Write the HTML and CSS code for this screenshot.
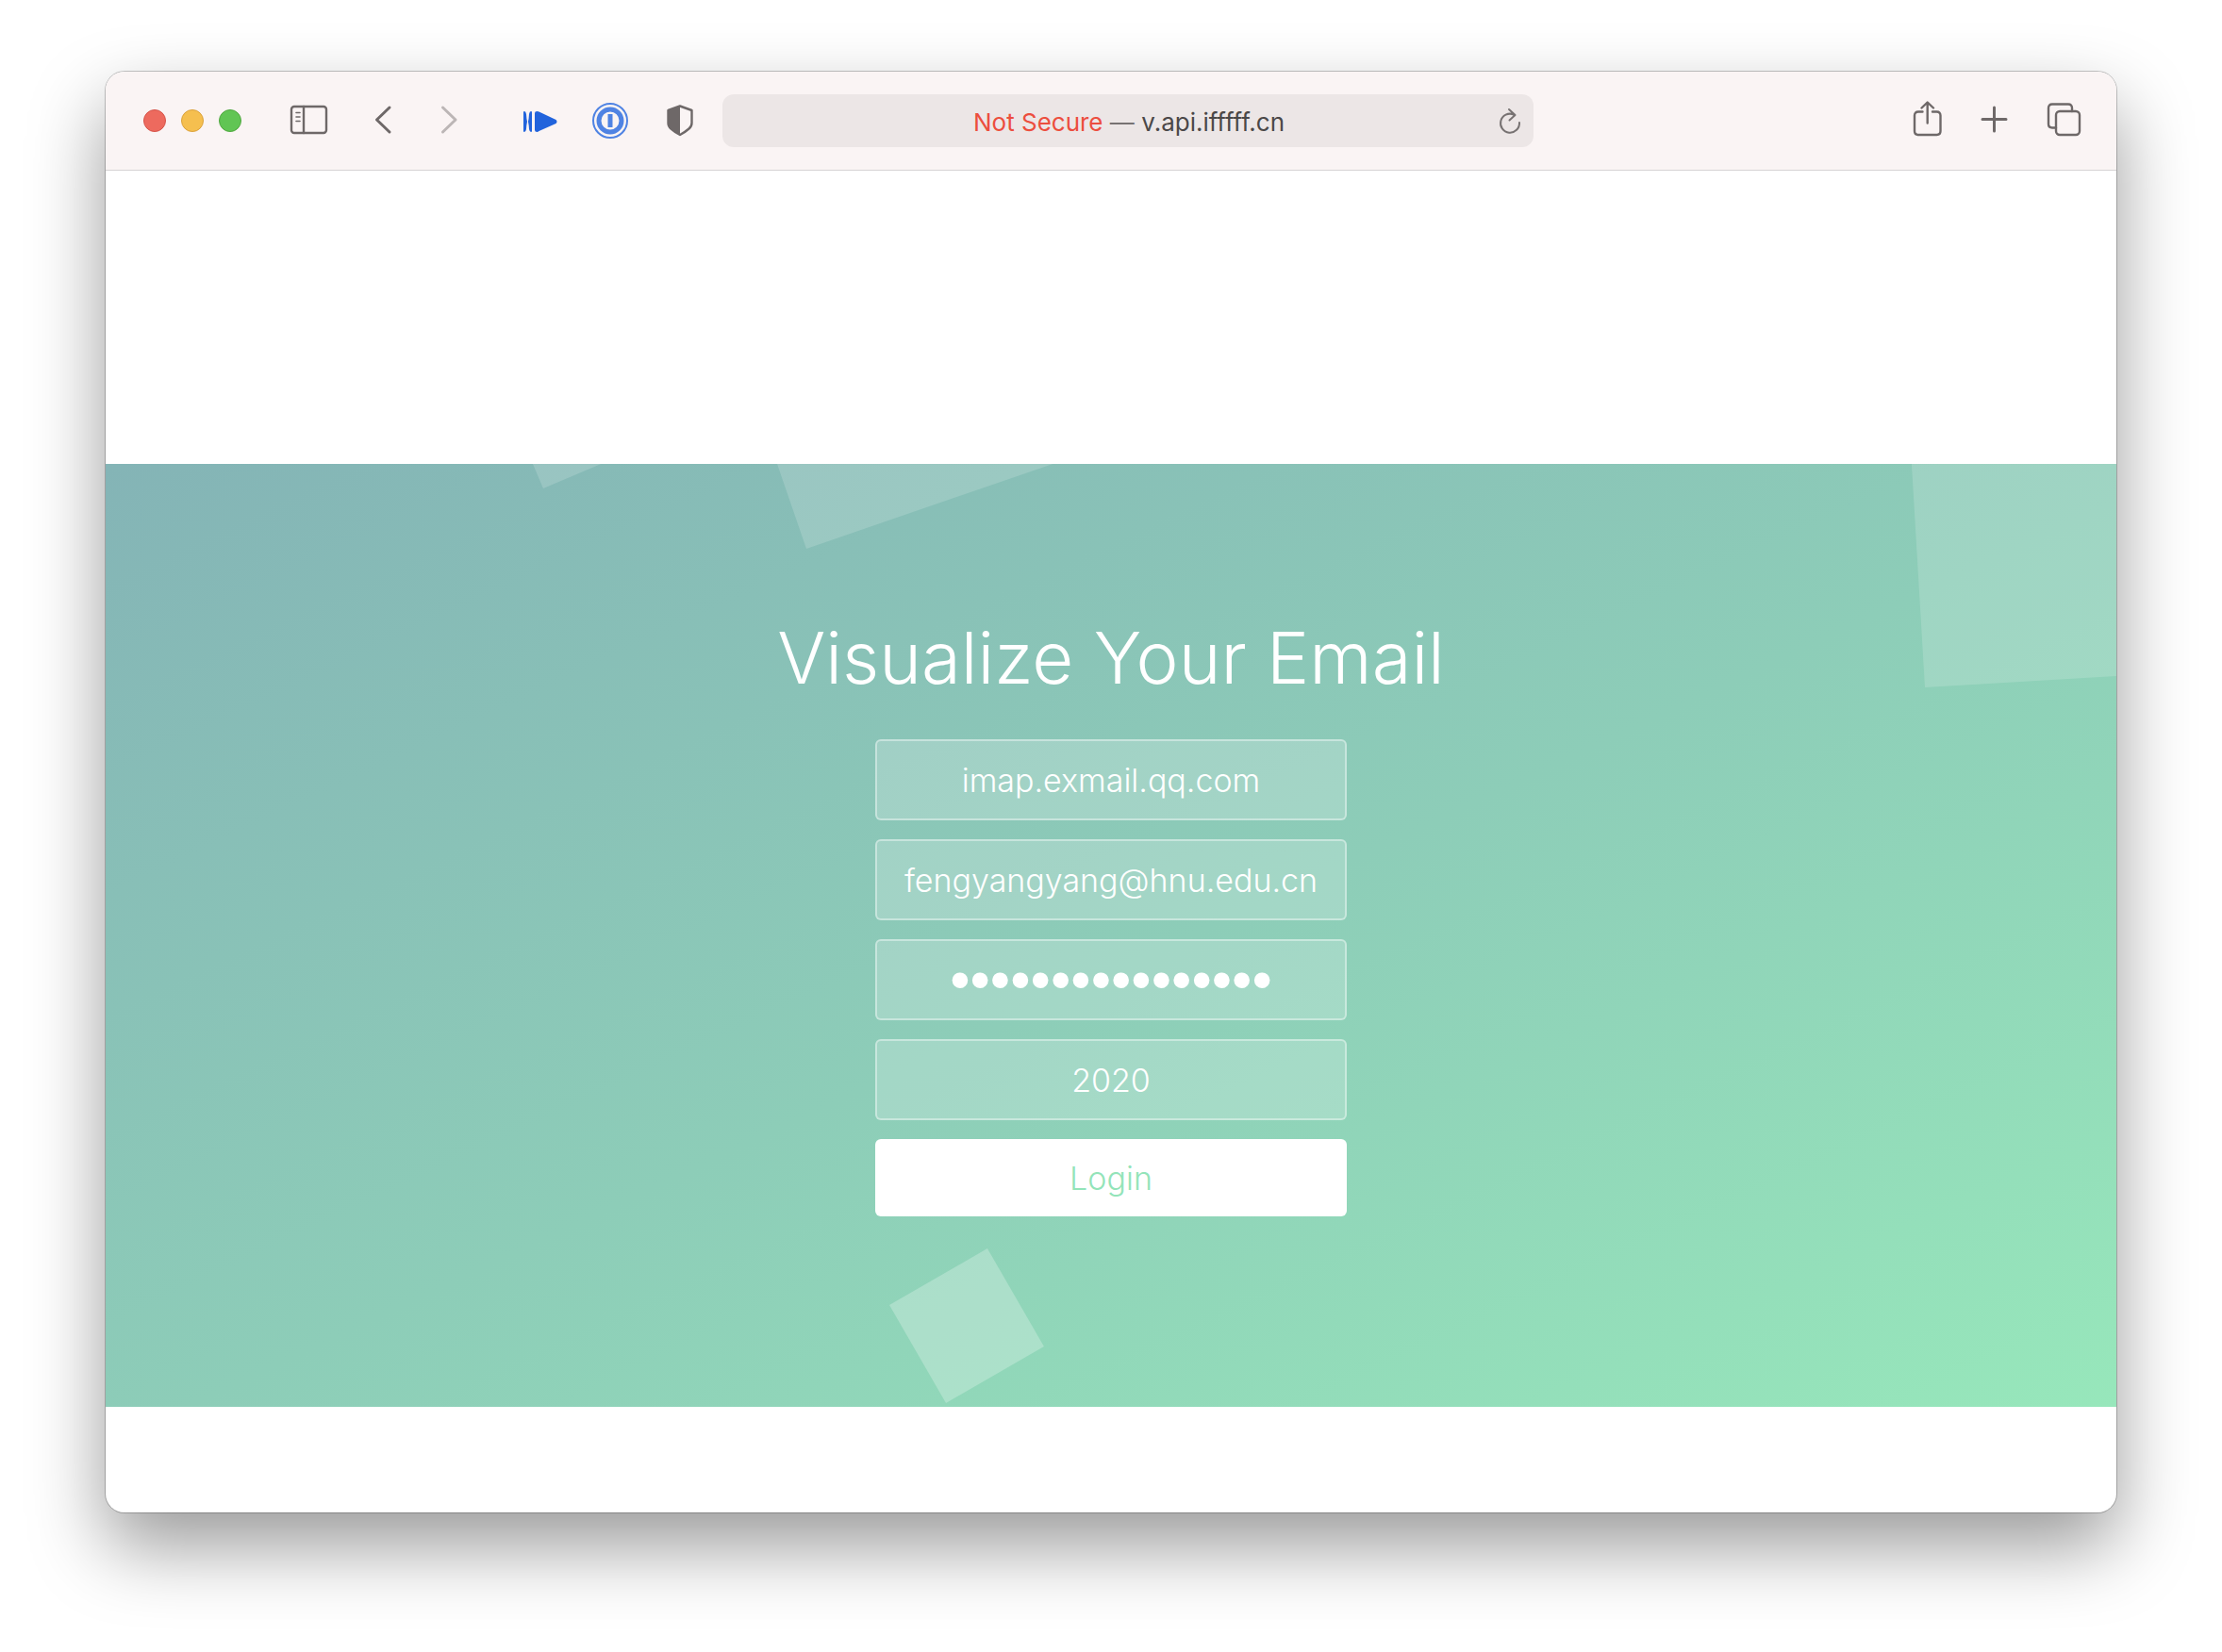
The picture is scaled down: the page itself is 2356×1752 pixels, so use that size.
FILE: index.html
```html
<!DOCTYPE html>
<html lang="en">
<head>
<meta charset="utf-8">
<title>Visualize Your Email</title>
<link rel="stylesheet" href="styles.css">
</head>
<body>
<div class="window">
  <header class="toolbar">
    <div class="lights">
      <button class="light light-close" aria-label="Close"></button>
      <button class="light light-minimize" aria-label="Minimize"></button>
      <button class="light light-zoom" aria-label="Zoom"></button>
    </div>
    <button class="icon" aria-label="Sidebar">
      <svg viewBox="0 0 40 40"><rect x="1" y="5" width="37" height="28" rx="3"/><path d="M14 5v28"/><path class="thin" d="M6 11.500h4M6 16h4M6 20.500h4"/></svg>
    </button>
    <nav class="group history">
      <button class="icon" aria-label="Back"><svg viewBox="0 0 40 40"><path class="bold" d="M27 6 13.500 19 27 32"/></svg></button>
      <button class="icon icon-off" aria-label="Forward"><svg viewBox="0 0 40 40"><path class="bold" d="M13.500 6 27 19 13.500 32"/></svg></button>
    </nav>
    <div class="group extensions">
      <button class="icon" aria-label="Fast forward">
        <svg viewBox="0 0 40 40"><path class="blue" d="M2 11q0-1 1-1 1.500 0 2 3 .3 5 1 8-.7 3-1 8-.5 3-2 3-1 0-1-1zM11 11q0-1-1-1-1.500 0-2 3-.3 5-1 8 .7 3 1 8 .5 3 2 3 1 0 1-1zM14 12q0-2 2.500-2 1 0 2 .5l18 8.500q2 2 0 4l-18 8q-1 1-2 1-2.500 0-2.500-2z"/></svg>
      </button>
      <button class="icon" aria-label="Passwords">
        <svg class="lock" viewBox="0 0 40 40"><circle cx="20" cy="20" r="18"/><circle cx="20" cy="20" r="12" stroke-width="5"/><path d="M20 13v14" stroke-width="5" stroke-linecap="butt"/></svg>
      </button>
      <button class="icon" aria-label="Privacy report">
        <svg viewBox="0 0 40 40"><path d="M20 4.500 32.500 9v13.500q0 3.500-3 6-4 3.500-9.500 6.500-5.500-3-9.500-6.500-3-2.500-3-6V9z"/><path class="solid" d="M20 4.500V35q-5.500-3-9.500-6.500-3-2.500-3-6V9z"/></svg>
      </button>
    </div>
    <div class="address">
      <p class="location"><span class="warning">Not Secure</span> <span class="dash">—</span> v.api.ifffff.cn</p>
      <button class="reload" aria-label="Reload">
        <svg viewBox="0 0 28 28"><path d="M23 16a10 10 0 1 1-6-8.500M12 2l6.500 6-6 5.500"/></svg>
      </button>
    </div>
    <div class="group actions">
      <button class="icon" aria-label="Share">
        <svg viewBox="0 0 40 40"><path d="M13.500 10.500H9q-4 0-4 4V31q0 4 4 4h19.500q4 0 4-4V14.500q0-4-4-4H24M18.700 22.500V1M12.500 6.500 18.700.5l6.300 6"/></svg>
      </button>
      <button class="icon" aria-label="New tab"><svg viewBox="0 0 40 40"><path class="bold" d="M17.500 6v25M5 18.500h25"/></svg></button>
      <button class="icon" aria-label="Tab overview">
        <svg viewBox="0 0 40 40"><path d="M28 10V6.500q0-4-4-4H7q-4 0-4 4v17q0 4 4 4h4"/><rect x="11" y="10" width="25" height="25" rx="4"/></svg>
      </button>
    </div>
  </header>
  <main class="page">
    <section class="hero">
      <div class="squares" aria-hidden="true">
        <span class="square square-a"></span>
        <span class="square square-b"></span>
        <span class="square square-c"></span>
        <span class="square square-d"></span>
      </div>
      <h1 class="title">Visualize Your Email</h1>
      <form class="login">
        <input class="field" type="text" aria-label="Mail server" value="imap.exmail.qq.com">
        <input class="field" type="text" aria-label="Email address" value="fengyangyang@hnu.edu.cn">
        <input class="field field-password" type="password" aria-label="Password" value="abcdefghijklmnop">
        <input class="field" type="text" aria-label="Year" value="2020">
        <button class="submit" type="button">Login</button>
      </form>
    </section>
  </main>
</div>
</body>
</html>
```

FILE: styles.css
```css
* {
  box-sizing: border-box;
}

body {
  margin: 0;
  padding: 76px 112px 148px;
  background: #fff;
  font-family: Inter, "Liberation Sans", sans-serif;
}

button,
input {
  margin: 0;
  padding: 0;
  border: 0;
  background: none;
  font: inherit;
}

.window {
  overflow: hidden;
  border-radius: 20px;
  background: #fff;
  box-shadow: 0 0 0 1px rgba(0, 0, 0, 0.22), 0 36px 80px rgba(0, 0, 0, 0.4);
}

/* Browser toolbar */
.toolbar {
  display: flex;
  align-items: center;
  height: 105px;
  padding: 0 35px 0 40px;
  border-bottom: 1px solid #d6d3d4;
  background: #faf4f4;
}

.lights {
  display: flex;
  gap: 16px;
  margin-right: 52px;
}

.light {
  width: 24px;
  height: 24px;
  border: 1px solid;
  border-radius: 50%;
}

.light-close {
  border-color: #d6544a;
  background: #ed6a5e;
}

.light-minimize {
  border-color: #dba23c;
  background: #f5bf4f;
}

.light-zoom {
  border-color: #50a73f;
  background: #61c554;
}

.icon {
  flex: none;
  width: 40px;
  height: 40px;
  color: #6e6868;
}

.icon-off {
  color: #bcb6b6;
}

svg {
  display: block;
  width: 100%;
  height: 100%;
  overflow: visible;
  fill: none;
  stroke: currentColor;
  stroke-width: 2.4;
  stroke-linecap: round;
  stroke-linejoin: round;
}

.thin {
  stroke-width: 1.6;
}

.bold {
  stroke-width: 3;
}

.solid {
  fill: currentColor;
  stroke: none;
}

.blue {
  fill: #2163dc;
  stroke: none;
}

.lock {
  stroke: #4f83e3;
  stroke-width: 2;
}

.group {
  display: flex;
}

.history {
  gap: 30px;
  margin-left: 38px;
}

.extensions {
  gap: 34px;
  margin-left: 57px;
}

.actions {
  gap: 32px;
}

.address {
  display: flex;
  flex: 0 1 860px;
  align-items: center;
  height: 56px;
  margin: 0 auto 0 25px;
  padding: 0 10px 0 40px;
  border-radius: 12px;
  background: #ece6e6;
}

.location {
  flex: 1;
  margin: 0;
  padding-top: 3px;
  color: #4b4848;
  font-size: 26px;
  line-height: 32px;
  text-align: center;
}

.warning {
  color: #ec4e3e;
}

.dash {
  color: #777272;
}

.reload {
  width: 28px;
  height: 28px;
  color: #777272;
}

.reload svg {
  stroke-width: 2;
}

/* Login page */
.page {
  padding: 311px 0 112px;
}

.hero {
  position: relative;
  overflow: hidden;
  min-height: 1000px;
  padding: 157px 0;
  background: linear-gradient(to bottom right, #84b4b6, #8dcdb8 52%, #97e7bb);
  color: #fff;
  text-align: center;
}

.title {
  position: relative;
  margin: 0 0 39px;
  font-size: 76px;
  font-weight: 300;
  line-height: 96px;
}

.login {
  position: relative;
  display: flex;
  flex-direction: column;
  gap: 20px;
  width: 500px;
  margin: 0 auto;
  font-size: 34px;
  font-weight: 300;
}

.field {
  height: 86px;
  border: 2px solid rgba(255, 255, 255, 0.4);
  border-radius: 6px;
  background: rgba(255, 255, 255, 0.2);
  color: #fff;
  text-align: center;
}

.field-password {
  font-family: "Liberation Sans", sans-serif;
  font-size: 61px;
}

.submit {
  height: 82px;
  border-radius: 6px;
  background: #fff;
  color: #93e4b9;
}

/* Floating squares, each turned about its lower left corner */
.square {
  position: absolute;
  background: rgba(255, 255, 255, 0.16);
  transform-origin: 0 100%;
}

.square-a {
  bottom: 974px;
  left: 464px;
  width: 160px;
  height: 160px;
  transform: rotate(-23deg);
}

.square-b {
  bottom: 910px;
  left: 743px;
  width: 320px;
  height: 320px;
  transform: rotate(-19deg);
}

.square-c {
  right: -117px;
  bottom: 763px;
  width: 320px;
  height: 320px;
  transform: rotate(-3.4deg);
}

.square-d {
  bottom: 4px;
  left: 891px;
  width: 120px;
  height: 120px;
  background: rgba(255, 255, 255, 0.25);
  transform: rotate(-30deg);
}
```
